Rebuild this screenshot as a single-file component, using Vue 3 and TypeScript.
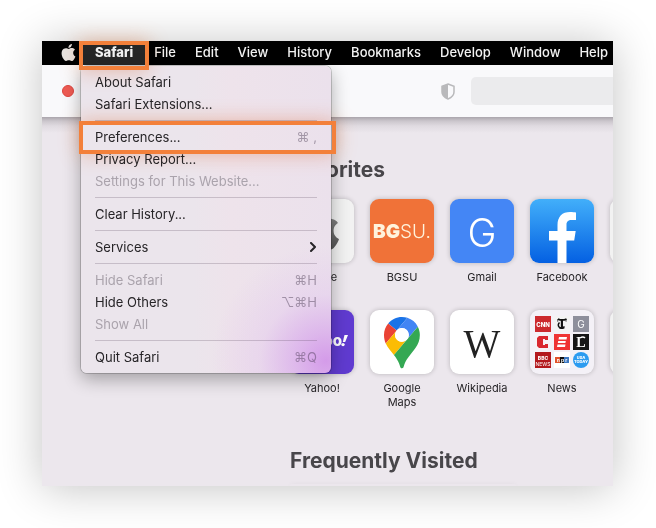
<script setup lang="ts">
interface MenuEntry {
  label: string
  keys?: string
  disabled?: boolean
  marked?: boolean
  submenu?: boolean
}

interface Site {
  name: string
  kind: string
}

const menus: string[] = ['File', 'Edit', 'View', 'History', 'Bookmarks', 'Develop', 'Window', 'Help']

const groups: MenuEntry[][] = [
  [{ label: 'About Safari' }, { label: 'Safari Extensions...' }],
  [
    { label: 'Preferences...', keys: '⌘ ,', marked: true },
    { label: 'Privacy Report...' },
    { label: 'Settings for This Website...', disabled: true },
  ],
  [{ label: 'Clear History...' }],
  [{ label: 'Services', submenu: true }],
  [
    { label: 'Hide Safari', keys: '⌘H', disabled: true },
    { label: 'Hide Others', keys: '⌥⌘H' },
    { label: 'Show All', disabled: true },
  ],
  [{ label: 'Quit Safari', keys: '⌘Q' }],
]

const sites: Site[] = [
  { name: 'Apple', kind: 'apple' },
  { name: 'BGSU', kind: 'bgsu' },
  { name: 'Gmail', kind: 'gmail' },
  { name: 'Facebook', kind: 'facebook' },
  { name: '', kind: 'blank' },
  { name: 'Yahoo!', kind: 'yahoo' },
  { name: 'Google Maps', kind: 'maps' },
  { name: 'Wikipedia', kind: 'wikipedia' },
  { name: 'News', kind: 'news' },
  { name: '', kind: 'blank' },
]

const applePath =
  'M12.152 6.896c-.948 0-2.415-1.078-3.96-1.04-2.04.027-3.91 1.183-4.961 3.014-2.117 3.675-.546 9.103 1.519 12.09 1.013 1.454 2.208 3.09 3.792 3.039 1.52-.065 2.09-.987 3.935-.987 1.831 0 2.35.987 3.96.948 1.637-.026 2.676-1.48 3.676-2.948 1.156-1.688 1.636-3.325 1.662-3.415-.039-.013-3.182-1.221-3.22-4.857-.026-3.04 2.48-4.494 2.597-4.559-1.429-2.09-3.623-2.324-4.39-2.376-2-.156-3.675 1.09-4.61 1.09zM15.53 3.83c.843-1.012 1.4-2.427 1.245-3.83-1.207.052-2.662.805-3.532 1.818-.78.896-1.454 2.338-1.273 3.714 1.338.104 2.715-.688 3.559-1.701'
</script>

<template>
  <main class="desk">
    <div class="screen">
      <nav class="menubar">
        <svg class="apple-mark" viewBox="0 0 24 24" aria-hidden="true"><path :d="applePath" /></svg>
        <div class="open-menu">
          <button type="button" class="title title-open">Safari</button>
          <div class="dropdown">
            <div v-for="(group, g) in groups" :key="g" class="group">
              <button
                v-for="entry in group"
                :key="entry.label"
                type="button"
                class="entry"
                :class="{ marked: entry.marked }"
                :disabled="entry.disabled"
              >
                <span>{{ entry.label }}</span>
                <span v-if="entry.keys" class="keys">{{ entry.keys }}</span>
                <svg v-if="entry.submenu" class="chevron" viewBox="0 0 8 10" aria-hidden="true">
                  <path d="M2 1l4 4-4 4" />
                </svg>
              </button>
            </div>
          </div>
        </div>
        <div class="titles">
          <button v-for="m in menus" :key="m" type="button" class="title">{{ m }}</button>
        </div>
      </nav>

      <header class="toolbar">
        <button type="button" class="close" aria-label="Close"></button>
        <div class="address">
          <svg class="shield" viewBox="0 0 14 17" aria-hidden="true">
            <path class="shield-line" d="M7 1L13 3.2V9C13 12.200 10.500 14.600 7 16C3.500 14.600 1 12.200 1 9V3.200Z" />
            <path class="shield-half" d="M7 1L1 3.200V9C1 12.200 3.500 14.600 7 16Z" />
          </svg>
          <input type="text" class="field" aria-label="Address" />
        </div>
      </header>

      <section class="start">
        <h2>Favorites</h2>
        <div class="grid">
          <a v-for="(s, i) in sites" :key="i" href="#" class="site">
            <span class="tile" :class="s.kind">
              <svg v-if="s.kind === 'apple'" viewBox="0 0 64 64" aria-hidden="true">
                <defs>
                  <linearGradient id="steel" x1="0" y1="0" x2="0" y2="1">
                    <stop offset="0" stop-color="#8c8c8c" />
                    <stop offset="1" stop-color="#555" />
                  </linearGradient>
                </defs>
                <path :d="applePath" fill="url(#steel)" transform="translate(12 10) scale(1.7)" />
              </svg>
              <svg v-else-if="s.kind === 'bgsu'" viewBox="0 0 64 64" aria-hidden="true">
                <text x="3" y="39" class="bgsu-text"><tspan class="heavy">BG</tspan><tspan class="thin">SU.</tspan></text>
              </svg>
              <svg v-else-if="s.kind === 'gmail'" viewBox="0 0 64 64" aria-hidden="true">
                <text x="32" y="48" class="gmail-text">G</text>
              </svg>
              <svg v-else-if="s.kind === 'facebook'" viewBox="0 0 64 64" aria-hidden="true">
                <path
                  fill="#fff"
                  d="M27.500 64V41.500H19V32H27.500V26C27.500 17.500 32.300 13 40 13C42.500 13 44.500 13.200 46 13.500V21H41.700C38 21 36.500 22.800 36.500 25.600V32H45.700L44.200 41.500H36.500V64Z"
                />
              </svg>
              <svg v-else-if="s.kind === 'yahoo'" viewBox="0 0 64 64" aria-hidden="true">
                <text x="52" y="36" class="yahoo-text">yahoo</text>
                <path fill="#fff" d="M54.500 25H58L55.200 32H52.800Z" />
                <circle cx="53" cy="34.600" r="1.700" fill="#fff" />
              </svg>
              <svg v-else-if="s.kind === 'maps'" viewBox="0 0 64 64" aria-hidden="true">
                <g transform="translate(14 7) scale(0.388)">
                  <path fill="#1a73e8" d="M60.2 2.2C55.8.8 51 0 46.1 0 32 0 19.3 6.400 10.800 16.500l21.800 18.300L60.200 2.200z" />
                  <path fill="#ea4335" d="M10.800 16.500C4.100 24.500 0 34.900 0 46.100c0 8.700 1.700 15.700 4.600 22l28-33.300-21.800-18.300z" />
                  <path fill="#4285f4" d="M46.200 28.500c9.800 0 17.700 7.900 17.700 17.700 0 4.300-1.600 8.300-4.200 11.400 0 0 13.900-16.600 27.500-32.700-5.600-10.800-15.300-19-27-22.700L32.600 34.800c3.300-3.800 8.100-6.300 13.600-6.300" />
                  <path fill="#fbbc04" d="M46.200 63.800c-9.800 0-17.700-7.900-17.700-17.700 0-4.300 1.500-8.300 4.100-11.300l-28 33.300c4.800 10.600 12.800 19.200 21 29.900l34.100-40.500c-3.300 3.900-8.100 6.300-13.500 6.300" />
                  <path fill="#34a853" d="M59.100 109.200c15.400-24.100 33.300-35 33.300-63 0-7.700-1.900-14.900-5.200-21.300L25.600 98c2.600 3.400 5.300 7.300 7.900 11.300 9.400 14.500 6.800 23.100 12.800 23.100s3.400-8.700 12.800-23.200" />
                  <circle cx="46.200" cy="46.200" r="17.700" fill="#fff" />
                </g>
              </svg>
              <svg v-else-if="s.kind === 'wikipedia'" viewBox="0 0 64 64" aria-hidden="true">
                <text x="32" y="47" class="wiki-text">W</text>
              </svg>
              <svg v-else-if="s.kind === 'news'" viewBox="0 0 64 64" class="news-art" aria-hidden="true">
                <rect x="5" y="6" width="16" height="16" fill="#cc2a2e" />
                <text x="13" y="17" font-size="6" font-weight="800" fill="#fff">CNN</text>
                <rect x="24" y="6" width="16" height="16" fill="#f3f3f3" />
                <text x="32" y="19" font-size="14" font-weight="700" fill="#111" class="serif">T</text>
                <path d="M29.500 12.500q-2.500 2.500 0 5q3 1.500 5-1M28 9q4 2.200 8.500 0" stroke="#111" stroke-width="1.500" fill="none" />
                <rect x="43" y="6" width="16" height="16" fill="#8e8f9c" />
                <text x="51" y="18" font-size="10" fill="#fff">G</text>
                <rect x="5" y="24" width="16" height="16" fill="#f6f2f5" />
                <path d="M9 26h9v4h-3v-1h-2v6h2v-1h3v4H9l-2-2v-8z" fill="#d9272e" />
                <rect x="24" y="24" width="16" height="16" fill="#ef3434" />
                <path d="M29 27h8l-.5 2.500h-8zM28.200 31h7.600l-.4 2h-7.600zM27.500 34.500h8l-.5 2.500h-8z" fill="#fff" />
                <rect x="43" y="24" width="16" height="16" fill="#161616" />
                <text x="51" y="37" font-size="14" font-weight="700" fill="#fff" class="serif">L</text>
                <path d="M50 28q3-2 5 0" stroke="#fff" stroke-width="1.500" fill="none" />
                <rect x="5" y="42" width="16" height="16" fill="#b3191e" />
                <text x="13" y="50" font-size="5" font-weight="800" fill="#fff">BBC</text>
                <text x="13" y="56" font-size="5" fill="#fff">NEWS</text>
                <rect x="24" y="42" width="16" height="16" fill="#fff" />
                <path d="M25 47h5v6h-5z" fill="#e0532c" />
                <path d="M30 47h4v6h-4z" fill="#111" />
                <path d="M34 47h5v6h-5z" fill="#3c77c1" />
                <text x="32" y="52" font-size="5" font-weight="700" fill="#fff">n p r</text>
                <circle cx="51" cy="50" r="8" fill="#2c9bf0" />
                <text x="51" y="49" font-size="4" font-weight="800" fill="#fff">USA</text>
                <text x="51" y="53" font-size="4" font-weight="800" fill="#fff">TODAY</text>
              </svg>
            </span>
            <span class="name">{{ s.name }}</span>
          </a>
        </div>
        <h2>Frequently Visited</h2>
        <div class="visited"></div>
      </section>
    </div>
  </main>
</template>

<style>
body {
  background: #fff;
}
</style>

<style scoped>
.desk {
  box-sizing: border-box;
  padding: 41px 43px 42px 42px;
  overflow: hidden;
  font-family: Inter, 'DejaVu Sans', sans-serif;
  font-size: 13px;
  color: #262427;
}
button {
  font: inherit;
  color: inherit;
  border: 0;
  margin: 0;
  background: none;
}
.screen {
  background: #ece7ed;
  box-shadow: 0 2px 42px rgba(0, 0, 0, 0.24);
}

/* Menu bar */
.menubar {
  display: flex;
  align-items: stretch;
  height: 24px;
  padding-left: 18px;
  background: #000;
  color: #f2f2f2;
}
.apple-mark {
  width: 17px;
  height: 17px;
  margin: 3px 6px 0 0;
  fill: #e6e4e2;
}
.open-menu {
  position: relative;
  display: flex;
  flex: none;
  background: #262626;
}
.titles {
  display: flex;
  flex: 1;
  min-width: 0;
  overflow: hidden;
}
.title {
  flex: none;
  padding: 0 10px 2px 9px;
  font-weight: 500;
}
.title-open {
  padding: 0 12px 2px;
  font-weight: 800;
}
.open-menu::before,
.open-menu::after {
  content: '';
  position: absolute;
  inset: 0 -4px -5px -4px;
  z-index: 3;
  pointer-events: none;
}
.open-menu::before,
.marked::before {
  box-shadow: 0 0 20px rgba(240, 120, 60, 0.4);
  mix-blend-mode: multiply;
}
.open-menu::after,
.marked::after {
  border: 4px solid #f3803a;
}

/* Open menu */
.dropdown {
  position: absolute;
  top: 25px;
  left: -2px;
  z-index: 2;
  box-sizing: border-box;
  width: 250px;
  padding: 5px 0;
  border-radius: 6px;
  color: #262427;
  background:
    radial-gradient(circle at 98% 96%, #d49be9 0, rgba(216, 168, 235, 0.75) 28px, rgba(226, 196, 238, 0.4) 66px, transparent 115px),
    linear-gradient(90deg, #ebe5ec 45%, #eee3eb 60%, #ebe1ec);
  box-shadow:
    0 0 0 1px rgba(0, 0, 0, 0.18),
    0 6px 18px rgba(0, 0, 0, 0.32);
}
.group + .group::before {
  content: '';
  display: block;
  height: 1px;
  margin: 5px 14px;
  background: rgba(70, 50, 75, 0.22);
}
.entry {
  position: relative;
  display: flex;
  align-items: center;
  justify-content: space-between;
  width: 100%;
  height: 22px;
  padding: 0 14px;
  text-align: left;
}
.entry:disabled {
  color: #aaa3ac;
}
.keys {
  color: rgba(60, 45, 68, 0.42);
}
.chevron {
  width: 8px;
  height: 10px;
  fill: none;
  stroke: #262427;
  stroke-width: 2;
  stroke-linecap: round;
  stroke-linejoin: round;
}
.marked::before,
.marked::after {
  content: '';
  position: absolute;
  inset: -5px -5px -6px -2px;
  z-index: 1;
  pointer-events: none;
}

/* Toolbar */
.toolbar {
  display: flex;
  align-items: center;
  justify-content: space-between;
  height: 52px;
  padding-left: 20px;
  background: #f9f9fb;
}
.close {
  width: 12px;
  height: 12px;
  padding: 0;
  border: 1px solid #dd453f;
  border-radius: 50%;
  background: #ee5b53;
}
.address {
  display: flex;
  align-items: center;
  gap: 16px;
}
.shield {
  width: 14px;
  height: 17px;
}
.shield-line {
  fill: none;
  stroke: #b9b9bb;
  stroke-width: 1.5;
}
.shield-half {
  fill: #b9b9bb;
}
.field {
  box-sizing: border-box;
  width: 142px;
  height: 28px;
  border: 0;
  border-radius: 5px 0 0 5px;
  background: #ebebed;
  font: inherit;
}

/* Start page */
.start {
  padding: 39px 0 0 248px;
  overflow: hidden;
  background: linear-gradient(#aaa5ac, #cbc6cc 4px, #e0dbe1 9px, rgba(236, 231, 237, 0) 16px);
}
h2 {
  margin: 0;
  font-size: 21px;
  line-height: 28px;
  font-weight: 700;
  color: #48464a;
}
.grid {
  display: grid;
  grid-template-columns: repeat(5, 64px);
  gap: 5px 16px;
  margin: 15px 0 31px;
}
.site {
  display: flex;
  flex-direction: column;
  align-items: center;
  gap: 7px;
  min-height: 106px;
  color: #262427;
  text-decoration: none;
}
.tile {
  width: 64px;
  height: 64px;
  border-radius: 9px;
  background: #fff;
  box-shadow: 0 0 5px rgba(0, 0, 0, 0.22);
  overflow: hidden;
}
.tile svg {
  display: block;
  width: 64px;
  height: 64px;
}
.name {
  font-size: 11px;
  line-height: 14px;
  text-align: center;
}
.apple,
.blank {
  background: #f2f2f2;
}
.bgsu {
  background: #f07238;
}
.gmail {
  background: #4486f5;
}
.facebook {
  background: linear-gradient(#42affa, #0460e2);
}
.yahoo {
  background: #603bd0;
}
.news {
  background: #f4f1f7;
}
.bgsu-text {
  font-size: 19px;
  fill: #fff3dc;
}
.heavy {
  font-weight: 900;
}
.thin {
  font-weight: 300;
}
.gmail-text {
  font-size: 39px;
  font-weight: 300;
  fill: #fff;
  text-anchor: middle;
}
.yahoo-text {
  font-size: 15px;
  font-weight: 800;
  fill: #fff;
  text-anchor: end;
}
.wiki-text {
  font-family: 'Liberation Serif', serif;
  font-size: 39px;
  fill: #222;
  text-anchor: middle;
}
.news-art text {
  text-anchor: middle;
}
.news-art .serif {
  font-family: 'Liberation Serif', serif;
}
.visited {
  height: 2px;
  width: 226px;
  margin-top: 9px;
  border-radius: 8px 8px 0 0;
  box-shadow: 0 0 4px rgba(0, 0, 0, 0.06);
}
</style>
